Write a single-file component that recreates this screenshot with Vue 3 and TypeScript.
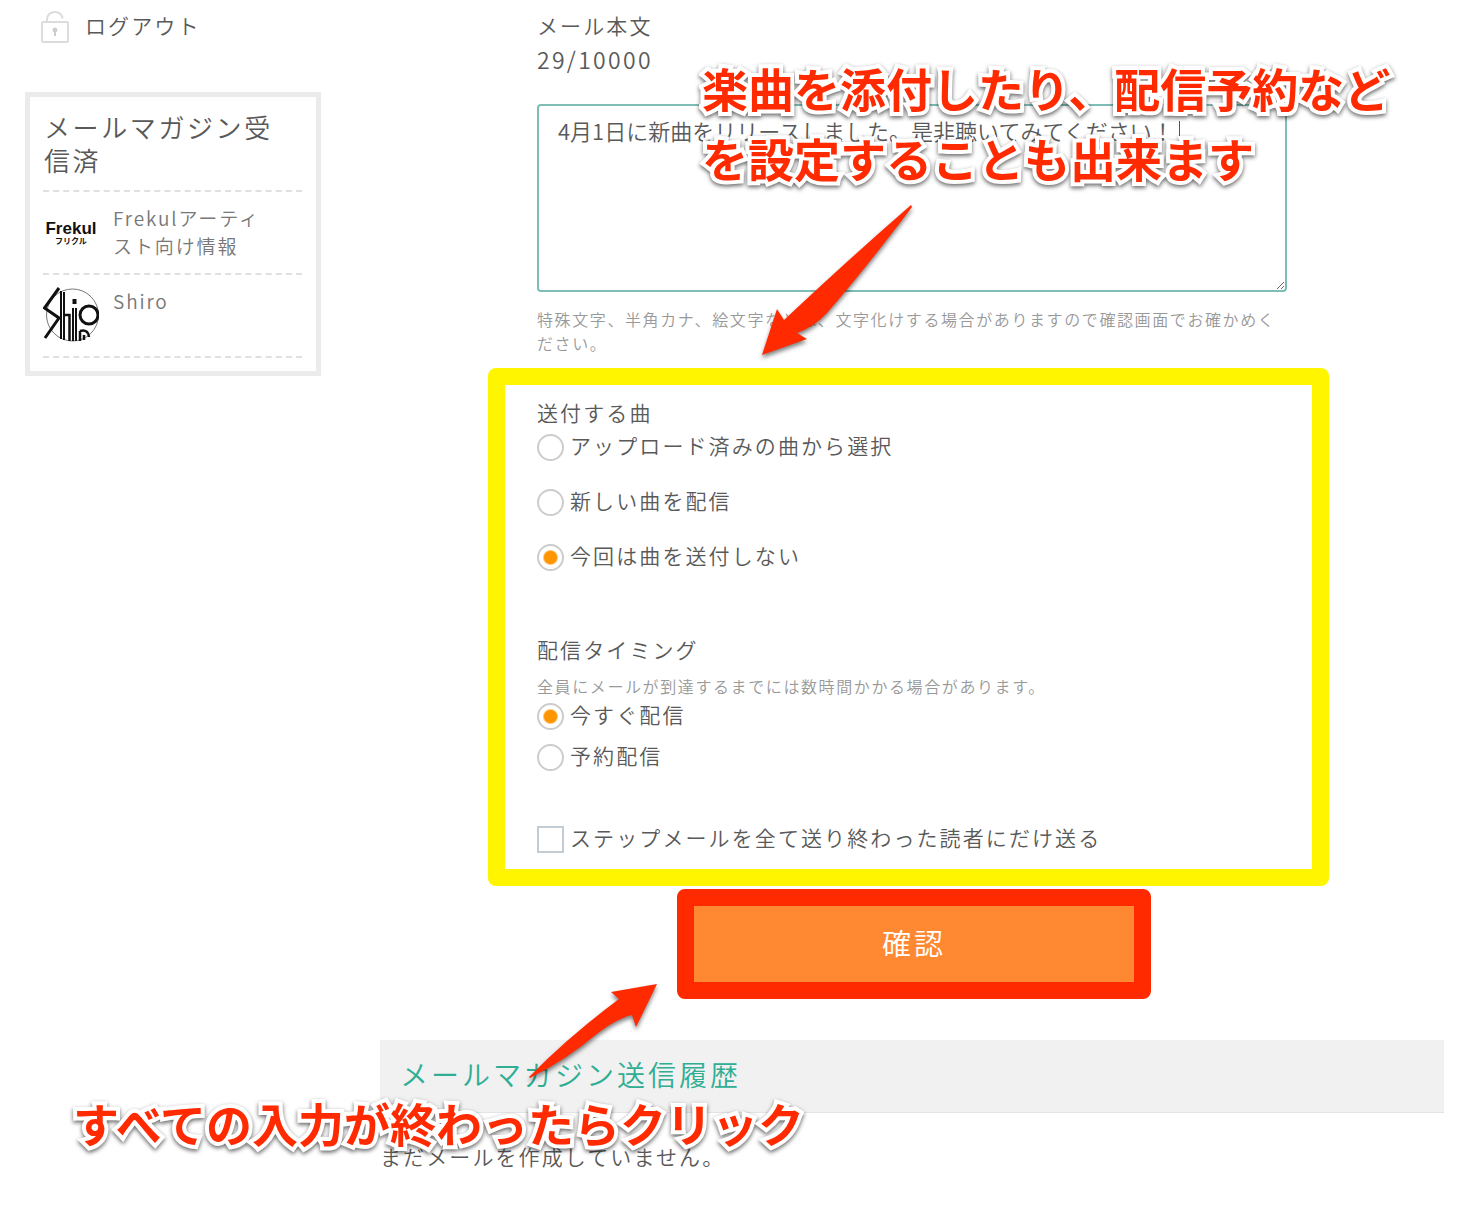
<script setup lang="ts">
import { ref } from 'vue'

interface Option {
  value: string
  label: string
}

const songOptions: Option[] = [
  { value: 'uploaded', label: 'アップロード済みの曲から選択' },
  { value: 'new', label: '新しい曲を配信' },
  { value: 'none', label: '今回は曲を送付しない' },
]
const timingOptions: Option[] = [
  { value: 'now', label: '今すぐ配信' },
  { value: 'reserve', label: '予約配信' },
]

const body = ref('4月1日に新曲をリリースしました。是非聴いてみてください！')
const song = ref('none')
const timing = ref('now')
const stepOnly = ref(false)
</script>

<template>
  <div class="page">
    <aside class="sidebar">
      <a class="logout" href="#">
        <svg class="lock" width="28" height="32" viewBox="0 0 28 32" fill="none" stroke="#dcdcdc" stroke-width="2" aria-hidden="true">
          <rect x="1" y="11" width="26" height="20" rx="1" />
          <path d="M6 11V8.500C6 4 9.500 1 14 1s7.500 3 7.500 6.500" />
          <circle cx="14" cy="19" r="2" fill="#ccc" stroke="#ccc" stroke-width="1" />
          <path d="M14 19v6" stroke="#ccc" />
        </svg>
        <span>ログアウト</span>
      </a>

      <section class="card">
        <h2>メールマガジン受信済</h2>
        <ul>
          <li>
            <span class="avatar frekul" aria-hidden="true">
              <span class="frekul-name">Frekul</span>
              <span class="frekul-kana">フリクル</span>
            </span>
            <a href="#">Frekulアーティスト向け情報</a>
          </li>
          <li>
            <svg class="avatar" viewBox="0 0 56 56" fill="none" stroke="#111" stroke-width="2.500" aria-hidden="true">
              <circle cx="29.500" cy="28" r="26" stroke="#777" stroke-width="1" />
              <path d="M16 1L1.500 21L16 31L2 51" stroke-width="3" />
              <path d="M18 4V52M21 5V53" stroke-width="2" />
              <path d="M21 28h5.500V54" stroke-width="2.500" />
              <path d="M30 21V54M33 21V54" stroke-width="2" />
              <path d="M31.500 12v5" stroke-width="4" />
              <circle cx="46" cy="28" r="9" stroke-width="3" />
              <path d="M37 54V44M37 44c6-2 9 2 9 6M41 53v-5" stroke-width="2.500" />
            </svg>
            <a href="#">Shiro</a>
          </li>
        </ul>
      </section>
    </aside>

    <main class="main">
      <form class="form" @submit.prevent>
        <div class="message">
          <label for="mail-body">メール本文</label>
          <p class="count">29/10000</p>
          <div class="editor">
            <textarea id="mail-body" v-model="body"></textarea>
            <span class="caret"></span>
          </div>
          <p class="hint">特殊文字、半角カナ、絵文字などは、文字化けする場合がありますので確認画面でお確かめください。</p>
        </div>

        <div class="options">
          <fieldset class="songs">
            <legend>送付する曲</legend>
            <label v-for="o in songOptions" :key="o.value" class="choice">
              <input v-model="song" type="radio" name="song" :value="o.value" />
              <span>{{ o.label }}</span>
            </label>
          </fieldset>
          <fieldset class="timing">
            <legend>配信タイミング</legend>
            <p class="hint">全員にメールが到達するまでには数時間かかる場合があります。</p>
            <label v-for="o in timingOptions" :key="o.value" class="choice">
              <input v-model="timing" type="radio" name="timing" :value="o.value" />
              <span>{{ o.label }}</span>
            </label>
          </fieldset>
          <label class="choice step">
            <input v-model="stepOnly" type="checkbox" />
            <span>ステップメールを全て送り終わった読者にだけ送る</span>
          </label>
        </div>

        <button class="confirm" type="submit">確認</button>
      </form>

      <section class="history">
        <h2>メールマガジン送信履歴</h2>
        <p>まだメールを作成していません。</p>
      </section>
    </main>

    <svg class="arrows" width="1480" height="1212" viewBox="0 0 1480 1212" fill="#ff2a00" aria-hidden="true">
      <path d="M911 205Q850 258 784 320L777 309L762 355L807 339L797 333Q814 327 827 313Q866 268 912 207Z" />
      <path d="M529 1077Q568 1037 619 999L611 992L657 984L636 1027L632 1015Q618 1018 598 1033Q566 1060 530 1078Z" />
    </svg>
    <p class="note note-options">楽曲を添付したり、配信予約など<br />を設定することも出来ます</p>
    <p class="note note-confirm">すべての入力が終わったらクリック</p>
  </div>
</template>

<style>
body {
  margin: 0;
  background: #fff;
}
</style>

<style scoped>
.page {
  position: relative;
  display: flex;
  gap: 59px;
  box-sizing: border-box;
  min-height: 100vh;
  padding: 9px 36px 36px 25px;
  overflow: hidden;
  color: #595959;
  font-family: "Noto Sans CJK JP", sans-serif;
  font-size: 21px;
  font-weight: 350;
  line-height: 33px;
}
h2,
p,
ul,
fieldset {
  margin: 0;
  padding: 0;
  border: 0;
  font-weight: inherit;
}
a {
  color: inherit;
  text-decoration: none;
}
.logout,
.message label,
.count,
legend,
.choice,
.hint,
.card,
.history p {
  letter-spacing: 0.1em;
}

/* Sidebar */
.sidebar {
  flex: 0 0 296px;
}
.logout {
  display: flex;
  gap: 16px;
  height: 33px;
  padding-left: 16px;
}
.lock {
  margin-top: 2px;
}
.card {
  margin-top: 50px;
  padding: 13px 14px 13px 13px;
  border: 5px solid #ebebeb;
}
.card h2 {
  padding: 0 24px 14px 1px;
  font-size: 26px;
  letter-spacing: 0.1em;
}
.card ul {
  border-top: 2px dashed #e0e0e0;
  list-style: none;
}
.card li {
  display: flex;
  gap: 14px;
  padding: 12px 24px 13px 0;
  border-bottom: 2px dashed #e0e0e0;
  color: #777;
  font-size: 19px;
  line-height: 28px;
  letter-spacing: 0.1em;
}
.avatar {
  flex: none;
  width: 56px;
  height: 56px;
}
.frekul {
  display: flex;
  flex-direction: column;
  align-items: center;
  justify-content: center;
  color: #111;
  letter-spacing: 0;
}
.frekul-name {
  font-family: "Liberation Sans", sans-serif;
  font-size: 17px;
  font-weight: 700;
  line-height: 18px;
}
.frekul-kana {
  font-size: 8px;
  font-weight: 700;
  line-height: 6px;
}

/* Form */
.main {
  flex: 1;
  min-width: 0;
}
.form {
  margin: 0 115px 0 108px;
}
.message {
  padding: 0 42px 13px 49px;
}
.message label {
  display: block;
}
.count {
  padding-top: 1px;
  font-size: 23px;
}
.editor {
  position: relative;
  margin: 28px 0 15px;
}
textarea {
  display: block;
  box-sizing: border-box;
  width: 100%;
  height: 188px;
  padding: 8px 19px;
  border: 2px solid #7dbdb6;
  border-radius: 4px;
  outline: 0;
  background: #fff;
  color: inherit;
  font: inherit;
  font-size: 22px;
}
.caret {
  position: absolute;
  top: 17px;
  left: 642px;
  width: 1px;
  height: 24px;
  background: #555;
}
.hint {
  color: #999;
  font-size: 16px;
  line-height: 24px;
}
.options {
  padding: 11px 32px 14px;
  border: 17px solid #fff500;
  border-radius: 8px;
}
legend {
  display: block;
  padding: 0 0 1px;
}
.choice {
  display: flex;
  align-items: center;
  gap: 6px;
}
.choice span {
  padding-bottom: 2px;
  line-height: 31px;
}
.songs .choice + .choice {
  margin-top: 22px;
}
.timing {
  margin-top: 60px;
}
.timing .hint {
  margin-top: 7px;
}
.timing .choice + .choice {
  margin-top: 8px;
}
.timing .hint + .choice {
  margin-top: 1px;
}
.step {
  margin-top: 49px;
}
input {
  flex: none;
  box-sizing: border-box;
  width: 27px;
  height: 27px;
  margin: 2px 0 0;
  border: 2px solid #ccc;
  background: #fff;
  appearance: none;
}
input[type="radio"] {
  border-radius: 50%;
}
input[type="radio"]:checked {
  background: radial-gradient(circle, #ff9500 6px, #fff 8px);
}
input[type="checkbox"] {
  border-color: #c3ccd2;
}
.confirm {
  display: block;
  box-sizing: border-box;
  width: 474px;
  height: 110px;
  margin: 3px 0 0 189px;
  padding: 0 0 4px;
  border: 17px solid #ff2a00;
  border-radius: 8px;
  background: #ff8833;
  color: #fff;
  font: inherit;
  font-size: 29px;
  letter-spacing: 3px;
}

/* History */
.history {
  margin-top: 41px;
}
.history h2 {
  padding: 18px 20px 21px;
  border-bottom: 1px solid #e4e4e4;
  background: #f1f1f1;
  color: #2fae94;
  font-size: 28px;
  letter-spacing: 3px;
}
.history p {
  margin-top: 27px;
}

/* Annotations laid over the page */
.arrows {
  position: absolute;
  top: 0;
  left: 0;
  filter: drop-shadow(0 3px 2px rgba(0, 0, 0, 0.5));
  pointer-events: none;
}
.note {
  position: absolute;
  color: #ff2a00;
  font-size: 46px;
  font-weight: 700;
  line-height: 70px;
  white-space: nowrap;
  -webkit-text-stroke: 8px #fff;
  paint-order: stroke fill;
  stroke-linejoin: round;
  filter: drop-shadow(0 2px 2px rgba(0, 0, 0, 0.6));
}
.note-options {
  top: 52px;
  left: 702px;
}
.note-confirm {
  top: 1087px;
  left: 73px;
}
</style>
